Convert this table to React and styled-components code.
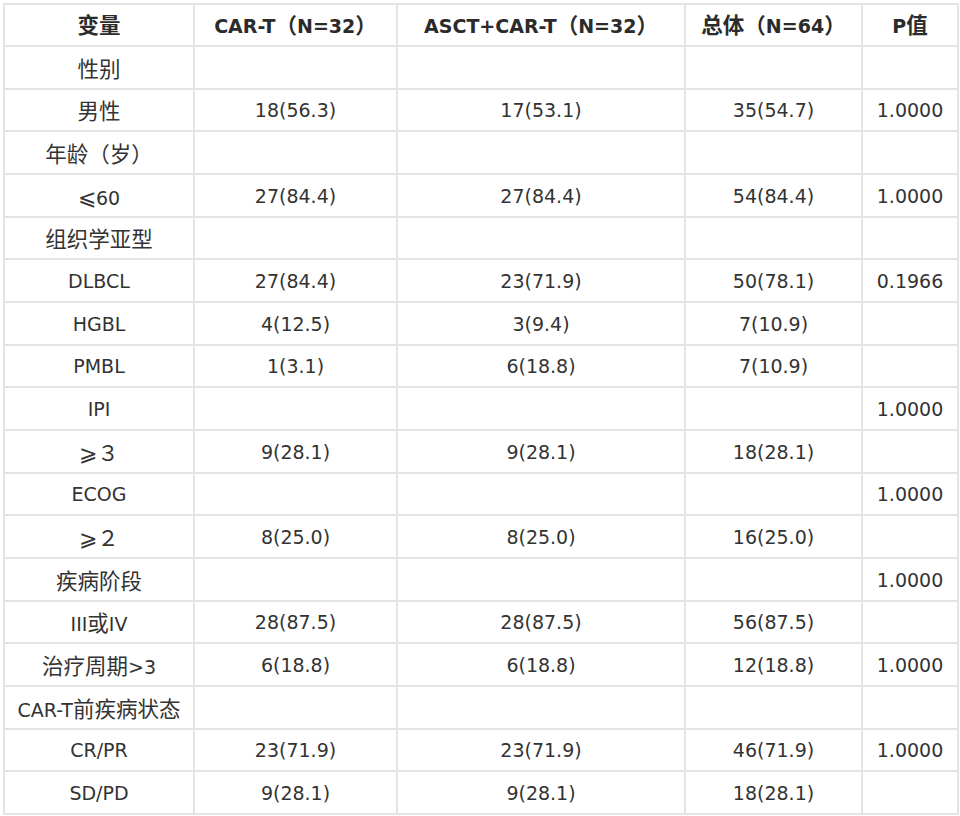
import React from 'react';
import styled, { createGlobalStyle } from 'styled-components';

const GlobalStyle = createGlobalStyle`
  body {
    margin: 0;
    background: #fff;
    font-family: "DejaVu Sans", "Noto Sans CJK SC", sans-serif;
    color: #333;
  }
`;

const Page = styled.div`
  padding: 3px 3px 0 3px;
`;

const Table = styled.table`
  width: 954px;
  border-collapse: collapse;
  table-layout: fixed;
  font-size: 19px;
`;

const HeadCell = styled.th`
  height: 38px;
  border: 2px solid #e4e4e4;
  font-weight: bold;
  text-align: center;
  vertical-align: middle;
  padding: 0 0 2px 0;
  line-height: 1;
  color: #2b2b2b;
  white-space: nowrap;
`;

const Cell = styled.td`
  height: 38.67px;
  border: 2px solid #e4e4e4;
  text-align: center;
  vertical-align: middle;
  padding: 2px 0 0 0;
  line-height: 1;
  white-space: nowrap;
  overflow: visible;
`;

const Cjk = styled.span`
  font-family: "Noto Sans CJK SC", sans-serif;
  font-size: 21.5px;
`;

const CJK_RUN = /([\u2a7d\u2a7e\u3000-\u9fff\uff00-\uffef]+)/;

function Text({ value }) {
  return value
    .split(CJK_RUN)
    .filter(Boolean)
    .map((part, i) => (CJK_RUN.test(part) ? <Cjk key={i}>{part}</Cjk> : part));
}

const columns = [
  { title: '变量', width: 190 },
  { title: 'CAR-T（N=32）', width: 203 },
  { title: 'ASCT+CAR-T（N=32）', width: 288 },
  { title: '总体（N=64）', width: 177 },
  { title: 'P值', width: 96 },
];

const rows = [
  ['性别', '', '', '', ''],
  ['男性', '18(56.3)', '17(53.1)', '35(54.7)', '1.0000'],
  ['年龄（岁）', '', '', '', ''],
  ['⩽60', '27(84.4)', '27(84.4)', '54(84.4)', '1.0000'],
  ['组织学亚型', '', '', '', ''],
  ['DLBCL', '27(84.4)', '23(71.9)', '50(78.1)', '0.1966'],
  ['HGBL', '4(12.5)', '3(9.4)', '7(10.9)', ''],
  ['PMBL', '1(3.1)', '6(18.8)', '7(10.9)', ''],
  ['IPI', '', '', '', '1.0000'],
  ['⩾３', '9(28.1)', '9(28.1)', '18(28.1)', ''],
  ['ECOG', '', '', '', '1.0000'],
  ['⩾２', '8(25.0)', '8(25.0)', '16(25.0)', ''],
  ['疾病阶段', '', '', '', '1.0000'],
  ['III或IV', '28(87.5)', '28(87.5)', '56(87.5)', ''],
  ['治疗周期>3', '6(18.8)', '6(18.8)', '12(18.8)', '1.0000'],
  ['CAR-T前疾病状态', '', '', '', ''],
  ['CR/PR', '23(71.9)', '23(71.9)', '46(71.9)', '1.0000'],
  ['SD/PD', '9(28.1)', '9(28.1)', '18(28.1)', ''],
];

export default function App() {
  return (
    <Page>
      <GlobalStyle />
      <Table>
        <colgroup>
          {columns.map((c) => (
            <col key={c.title} style={{ width: c.width }} />
          ))}
        </colgroup>
        <thead>
          <tr>
            {columns.map((c) => (
              <HeadCell key={c.title}>
                <Text value={c.title} />
              </HeadCell>
            ))}
          </tr>
        </thead>
        <tbody>
          {rows.map((r, i) => (
            <tr key={i}>
              {r.map((v, j) => (
                <Cell key={j}>
                  <Text value={v} />
                </Cell>
              ))}
            </tr>
          ))}
        </tbody>
      </Table>
    </Page>
  );
}
